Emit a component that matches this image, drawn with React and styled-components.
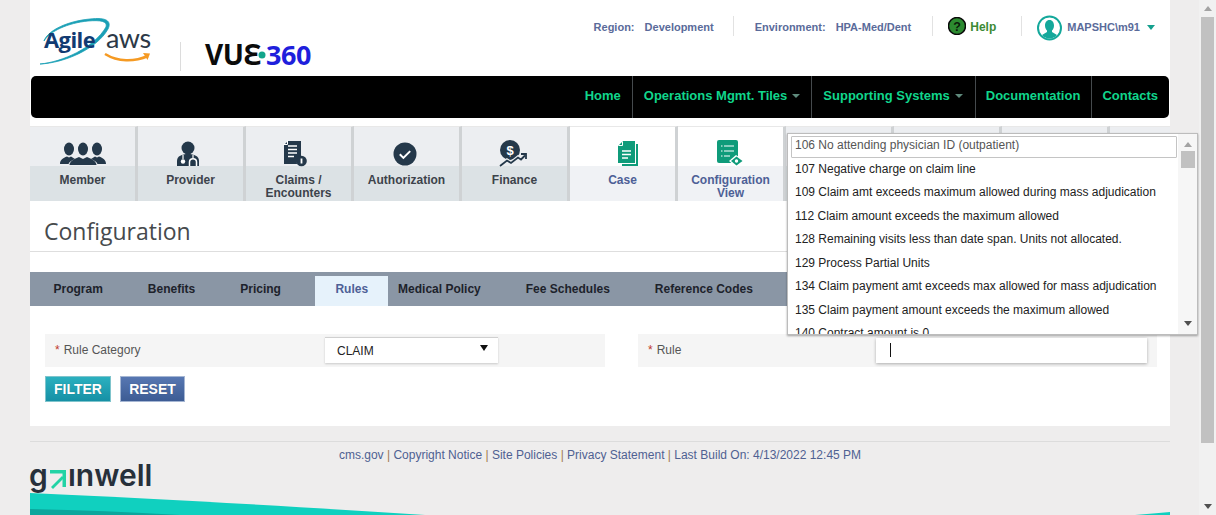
import React from "react";
import styled, { createGlobalStyle } from "styled-components";

const Global = createGlobalStyle`
  html, body { margin: 0; padding: 0; height: 515px; overflow: hidden; background: #eeeded; }
  body { font-family: "Liberation Sans", Arial, sans-serif; }
  * { box-sizing: border-box; }
`;

const Shell = styled.div`display: flex; width: 1216px; height: 515px; overflow: hidden; background: #eeeded;`;
const Main = styled.div`position: relative; width: 1199px; padding: 0 29px 0 30px; flex: none; display: flex; flex-direction: column;`;
const Sheet = styled.div`background: #fff; height: 426px; display: flex; flex-direction: column;`;

const Header = styled.header`height: 76px; display: flex; justify-content: space-between; flex: none;`;
const Logos = styled.div`display: flex; align-items: flex-start;`;
const Info = styled.div`display: flex; align-items: flex-start; padding: 16px 15px 0 0; font-size: 11px; font-weight: bold; color: #5a6b9a;`;
const InfoCell = styled.div`
  display: flex; align-items: center; height: 20px; gap: ${p => p.$gap || 0}px;
  padding: 2px ${p => p.$right}px 0 ${p => p.$left}px;
  border-left: ${p => (p.$first ? "none" : "1px solid #e2e2e2")};
`;
const InfoKey = styled.span`width: ${p => p.$w}px; flex: none;`;
const HelpLink = styled.span`color: #3c8a34; font-size: 12px;`;
const Caret = styled.i`display: inline-block; width: 0; height: 0; border-left: 4.5px solid transparent; border-right: 4.5px solid transparent; border-top: 5px solid ${p => p.$c};`;
const HelpGlyph = styled.svg`margin-top: -3px; flex: none;`;
const AvatarGlyph = styled.svg`margin-top: 1px; flex: none;`;
const UserCaret = styled(Caret)`margin-left: 2px;`;

const Nav = styled.nav`height: 42px; margin: 0 1px; background: #000; border-radius: 5px; display: flex; justify-content: flex-end; flex: none;`;
const NavItem = styled.a`
  display: flex; align-items: center; gap: 5px; height: 100%; padding: 0 ${p => p.$r || 11}px 3px ${p => p.$l || 11}px;
  font-size: 13px; font-weight: bold; color: #10d68c;
  border-left: ${p => (p.$first ? "none" : "1px solid #454a4d")};
`;
const NavCaret = styled(Caret)`border-left-width: 4px; border-right-width: 4px; border-top-width: 4.5px;`;

const Tiles = styled.div`display: flex; margin-top: 8px; height: 75px; flex: none; overflow: hidden;`;
const Tile = styled.div`
  flex: 0 0 108px; display: flex; flex-direction: column; text-align: center;
  border-right: 3px solid #cfd2d4; border-top: 1px solid #e8e8e8;
  background: ${p => (p.$on ? "#fff" : "#eceef1")};
`;
const TileIcon = styled.div`
  height: 39px; display: flex; align-items: center; justify-content: center; padding-top: 14px;
  transform: translateX(${p => p.$dx || 0}px);
`;
const TileLabel = styled.div`
  flex: 1; padding-top: 8px; font-size: 12px; line-height: 13px; font-weight: bold;
  background: ${p => (p.$on ? "#f0f2f5" : "#dce2e5")};
  color: ${p => (p.$on ? "#4d6096" : "#3d434b")};
`;
const TileRest = styled(Tile)`flex: 1; border-right: none;`;

const Title = styled.h1`margin: 0; height: 51px; padding: 15px 0 0 14px; font: 400 23px/30px "Open Sans", sans-serif; color: #464a4d; border-bottom: 1px solid #dedede; flex: none;`;
const Tabs = styled.div`margin-top: 20px; height: 34px; background: #8a96a5; display: flex; align-items: flex-end; padding-left: 1px; flex: none;`;
const Tab = styled.div`
  height: ${p => (p.$on ? 30 : 34)}px; line-height: ${p => (p.$on ? 26 : 34)}px;
  padding: 0 ${p => p.$r ?? 22.5}px 0 ${p => p.$l ?? 22.5}px; margin-left: ${p => p.$m || 0}px;
  font-size: 12px; font-weight: bold; color: ${p => (p.$on ? "#4d6096" : "#1d222b")};
  background: ${p => (p.$on ? "#e6f2fb" : "transparent")};
`;

const Form = styled.div`display: flex; gap: 33px; margin: 28px 13px 0 15px; flex: none;`;
const Field = styled.div`width: ${p => p.$w}px; height: 33px; background: #f5f5f5; display: flex; align-items: center; padding: 0 0 1px 10px; font-size: 12px; color: #555;`;
const Req = styled.span`color: #c0392b; margin-right: 4px;`;
const FieldLabel = styled.span`width: ${p => p.$w}px; flex: none;`;
const SelectBox = styled.div`
  position: relative; width: 173px; height: 26px; background: #fff; padding: 6px 12px; color: #222; font-size: 12px; line-height: 15px;
  box-shadow: 0 1px 2px rgba(0,0,0,.18); border-top: 1px solid #d0d0d0;
`;
const SelectArrow = styled.i`position: absolute; right: 10px; top: 7px; width: 0; height: 0; border-left: 4.5px solid transparent; border-right: 4.5px solid transparent; border-top: 6px solid #111;`;
const InputBox = styled.div`width: 271px; height: 25px; background: #fff; box-shadow: 0 1px 3px rgba(0,0,0,.3); padding: 5px 14px;`;
const Cursor = styled.div`width: 1px; height: 14px; background: #111;`;

const Buttons = styled.div`display: flex; gap: 9px; margin: 9px 0 0 15px; flex: none;`;
const Btn = styled.button`
  width: ${p => p.$w}px; height: 26px; padding: 0; font: bold 14px "Liberation Sans", Arial, sans-serif; color: #fff; text-shadow: 0 0 1px rgba(0,0,0,.25);
  border: 1px solid ${p => p.$b};
  background: linear-gradient(${p => p.$c1}, ${p => p.$c2});
`;

const Footer = styled.footer`flex: 1; position: relative; display: flex; flex-direction: column;`;
const Links = styled.div`margin-top: 15px; border-top: 1px solid #dcdcdc; height: 23px; padding-top: 5px; text-align: center; font-size: 12px; line-height: 16px; color: #4f6192; flex: none;`;
const Sep = styled.span`color: #a07a50;`;
const Gainwell = styled.svg`display: block; width: 125px; height: 29px; flex: none; overflow: visible;`;
const Wave = styled.svg`display: block; width: 1140px; height: 22px; flex: none;`;

const Drop = styled.div`
  position: absolute; left: 787px; top: 133px; width: 411px; height: 202px; background: #fff; overflow: hidden;
  border: 1px solid #bcbcbc; box-shadow: 0 1px 2px rgba(0,0,0,.35); display: flex;
`;
const DropList = styled.div`flex: 1; padding: 2px 1px 0 3px; min-width: 0;`;
const DropItem = styled.div`
  height: ${p => (p.$first ? 21.8 : 23.5)}px; line-height: ${p => (p.$first ? 17 : 23.5)}px; padding-left: ${p => (p.$first ? 3 : 4)}px; font-size: 12px; white-space: nowrap;
  color: ${p => (p.$first ? "#555" : "#222")};
  border: ${p => (p.$first ? "1px solid #c4c4c4" : "none")}; border-radius: 1px;
`;
const DropBar = styled.div`width: 19px; flex: none; background: #f6f6f6; display: flex; flex-direction: column; align-items: center; padding: 8px 0 8px;`;
const DropThumb = styled.div`width: 14px; height: 17px; background: #c1c1c1; margin-top: 4px;`;
const Spacer = styled.div`flex: 1;`;
const ArrowUp = styled.i`width: 0; height: 0; border-left: 4px solid transparent; border-right: 4px solid transparent; border-bottom: 5px solid ${p => p.$c || "#a3a3a3"};`;
const ArrowDown = styled.i`width: 0; height: 0; border-left: 4px solid transparent; border-right: 4px solid transparent; border-top: 5px solid ${p => p.$c || "#505050"};`;

const PageBar = styled.div`width: 17px; flex: none; background: #f1f1f1; display: flex; flex-direction: column; align-items: center; padding: 6px 0;`;
const PageThumb = styled.div`width: 13px; height: 426px; background: #c1c1c1; margin-top: 6px;`;

const navy = "#24384a";
const green = "#0f9b7a";

const MemberIcon = () => (
  <svg width="46" height="24" viewBox="0 0 46 24" fill={navy}>
    <ellipse cx="9" cy="7" rx="5" ry="6.500" /><ellipse cx="23" cy="7" rx="5" ry="6.500" /><ellipse cx="37" cy="7" rx="5" ry="6.500" />
    <path d="M0 22c0-4 3-6 7-7.500l2 1 2-1 4 2.500c-3 1-6 3-6.500 5z" />
    <path d="M46 22c0-4-3-6-7-7.500l-2 1-2-1-4 2.500c3 1 6 3 6.500 5z" />
    <path d="M9.500 23c0-3.500 5-6.500 9.500-8l4 2 4-2c4.500 1.500 9.500 4.500 9.500 8z" />
  </svg>
);
const ProviderIcon = () => (
  <svg width="24" height="26" viewBox="0 0 24 26">
    <circle cx="12" cy="7" r="6.500" fill={navy} />
    <path d="M1 25v-5c0-5 5-7 11-7s11 2 11 7v5z" fill={navy} />
    <path d="M7 14v4M17 14v3" stroke="#fff" strokeWidth="1.200" />
    <circle cx="7" cy="20.500" r="2.200" fill="#fff" />
    <path d="M13.500 25v-4c0-4.500 7-4.500 7 0v4" fill="none" stroke="#fff" strokeWidth="1.500" />
  </svg>
);
const ClaimsIcon = () => (
  <svg width="24" height="27" viewBox="0 0 24 27">
    <path d="M5 1h13v16a6 6 0 0 0-4 7H1V5z" fill={navy} />
    <path d="M5 6h9M5 9.500h9M5 13h9M5 16.500h6" stroke="#fff" strokeWidth="1.400" />
    <path d="M4.500 0.500v4H.5" fill="none" stroke="#fff" strokeWidth="1" />
    <circle cx="18.500" cy="21" r="5.300" fill={navy} />
    <path d="M18.500 18.500v5" stroke="#fff" strokeWidth="1.800" />
  </svg>
);
const AuthIcon = () => (
  <svg width="24" height="24" viewBox="0 0 24 24">
    <circle cx="12" cy="12" r="11.500" fill={navy} />
    <path d="M6.800 12.300l3.600 3.600 6.800-6.800" fill="none" stroke="#fff" strokeWidth="2" />
  </svg>
);
const FinanceIcon = () => (
  <svg width="28" height="28" viewBox="0 0 28 28">
    <circle cx="11" cy="10" r="10" fill={navy} />
    <text x="11" y="14.500" textAnchor="middle" fontSize="13" fontWeight="bold" fontFamily="Liberation Sans, sans-serif" fill="#fff">$</text>
    <path d="M1 26l7-5.500 4 2.500 7-5.500 3 2 4-4" fill="none" stroke="#eceef1" strokeWidth="4" />
    <path d="M1 26l7-5.500 4 2.500 7-5.500 3 2 4-4" fill="none" stroke={navy} strokeWidth="1.800" />
    <path d="M22 14h5v5" fill="none" stroke={navy} strokeWidth="1.800" />
  </svg>
);
const CaseIcon = () => (
  <svg width="20" height="25" viewBox="0 0 20 25">
    <path d="M18 3h2v22H4v-2h14z" fill={green} />
    <path d="M5 0h12v22H0V5z" fill={green} />
    <path d="M4.500 .5v4H.5" fill="none" stroke="#fff" />
    <path d="M4 10h9M4 13.500h9M4 17h6" stroke="#fff" strokeWidth="1.300" />
  </svg>
);
const ConfigIcon = () => (
  <svg width="28" height="27" viewBox="0 0 28 27">
    <rect x="0" y="0" width="21" height="23" rx="2" fill={green} />
    <path d="M4 6h1.500M7 6h10M4 11h1.500M7 11h10M4 16h1.500M7 16h6" stroke="#fff" strokeWidth="1.200" />
    <path d="M12 21l7-6 8.500 6-8.500 6z" fill="#fff" />
    <path d="M14 21l5.500-4.500 6 4.500-6 4.500z" fill={green} />
    <circle cx="19.500" cy="21" r="1.700" fill="#fff" />
  </svg>
);

const tiles = [
  { label: ["Member"], icon: <MemberIcon /> },
  { label: ["Provider"], icon: <ProviderIcon />, dx: -3 },
  { label: ["Claims /", "Encounters"], icon: <ClaimsIcon />, dx: -4 },
  { label: ["Authorization"], icon: <AuthIcon />, dx: -2 },
  { label: ["Finance"], icon: <FinanceIcon />, dx: -2 },
  { label: ["Case"], icon: <CaseIcon />, on: true, dx: 5 },
  { label: ["Configuration", "View"], icon: <ConfigIcon />, on: true },
  { label: [] }, { label: [] }, { label: [] },
];

const options = [
  "106 No attending physician ID (outpatient)",
  "107 Negative charge on claim line",
  "109 Claim amt exceeds maximum allowed during mass adjudication",
  "112 Claim amount exceeds the maximum allowed",
  "128 Remaining visits less than date span. Units not allocated.",
  "129 Process Partial Units",
  "134 Claim payment amt exceeds max allowed for mass adjudication",
  "135 Claim payment amount exceeds the maximum allowed",
  "140 Contract amount is 0",
];

const links = ["cms.gov", "Copyright Notice", "Site Policies", "Privacy Statement", "Last Build On: 4/13/2022 12:45 PM"];

export default function App() {
  return (
    <Shell>
      <Global />
      <Main>
        <Sheet>
          <Header>
            <Logos>
              <svg width="290" height="76" viewBox="0 0 290 76">
                <path d="M10 64C32 62 64 48 76 27 78 21 70 20 58 21 38 23 20 31 14 41 18 30 38 21 60 19 76 17 82 21 78 29 67 49 34 63 10 64z" fill="#1a9fb5" stroke="#1a9fb5" strokeWidth=".8" />
                <text x="14" y="48" fontFamily="Open Sans, sans-serif" fontWeight="700" fontSize="22" letterSpacing="-0.6" fill="#123b72">Agile</text>
                <text x="76" y="48" fontFamily="Lato, sans-serif" fontWeight="400" fontSize="27" letterSpacing="-0.5" fill="#2c3947">aws</text>
                <path d="M75 54c13 8 29 8 43 2" fill="none" stroke="#f59a23" strokeWidth="2.600" />
                <path d="M113 53l7 .5-2.500 6.500z" fill="#f59a23" />
                <path d="M150.500 42v29" stroke="#dcdcdc" />
                <text x="175" y="65" fontFamily="Noto Sans, sans-serif" fontWeight="700" fontSize="28" letterSpacing="-0.4" fill="#0b0b0b">VUƐ</text>
                <circle cx="232" cy="55" r="3.500" fill="#12a58a" />
                <text x="236" y="65" fontFamily="Noto Sans, sans-serif" fontWeight="700" fontSize="27" letterSpacing="-0.5" fill="#1f1fdc">360</text>
              </svg>
            </Logos>
            <Info>
              <InfoCell $first $left={0} $right={19}>
                <InfoKey $w={51}>Region:</InfoKey><span>Development</span>
              </InfoCell>
              <InfoCell $left={21} $right={21}>
                <InfoKey $w={81}>Environment:</InfoKey><span>HPA-Med/Dent</span>
              </InfoCell>
              <InfoCell $left={15} $right={25} $gap={4}>
                <HelpGlyph width="18" height="18" viewBox="0 0 18 18">
                  <circle cx="9" cy="9" r="8.500" fill="#2c8a30" stroke="#0a0a0a" strokeWidth="1.500" />
                  <text x="9" y="13.500" textAnchor="middle" fontSize="12.500" fontWeight="bold" fontFamily="Liberation Sans, sans-serif" fill="#0a1a0a">?</text>
                </HelpGlyph>
                <HelpLink>Help</HelpLink>
              </InfoCell>
              <InfoCell $left={15} $right={0} $gap={5}>
                <AvatarGlyph width="25" height="26" viewBox="0 0 25 26">
                  <circle cx="12.500" cy="13" r="11.500" fill="#fff" stroke="#14a89b" strokeWidth="2" />
                  <path d="M12.500 5c3 0 4.500 2.500 4.500 5.500 0 2.500-1 4-2 5v1.500l5 3c-1.500 2-4.500 3.500-7.500 3.500s-6-1.500-7.500-3.500l5-3V15.500c-1-1-2-2.500-2-5C8 7.500 9.500 5 12.500 5z" fill="#14a89b" />
                </AvatarGlyph>
                <span>MAPSHC\m91</span>
                <UserCaret $c="#14a08e" />
              </InfoCell>
            </Info>
          </Header>
          <Nav>
            <NavItem $first>Home</NavItem>
            <NavItem>Operations Mgmt. Tiles <NavCaret $c="#5f8a7c" /></NavItem>
            <NavItem $r={12}>Supporting Systems <NavCaret $c="#5f8a7c" /></NavItem>
            <NavItem $l={10}>Documentation</NavItem>
            <NavItem $l={10}>Contacts</NavItem>
          </Nav>
          <Tiles>
            {tiles.map((t, i) => (
              <Tile key={i} $on={t.on}>
                <TileIcon $dx={t.dx}>{t.icon}</TileIcon>
                <TileLabel $on={t.on}>{t.label.map(l => <div key={l}>{l}</div>)}</TileLabel>
              </Tile>
            ))}
            <TileRest><TileIcon /><TileLabel /></TileRest>
          </Tiles>
          <Title>Configuration</Title>
          <Tabs>
            <Tab>Program</Tab>
            <Tab>Benefits</Tab>
            <Tab>Pricing</Tab>
            <Tab $on $l={20} $r={20} $m={12}>Rules</Tab>
            <Tab $l={10}>Medical Policy</Tab>
            <Tab>Fee Schedules</Tab>
            <Tab>Reference Codes</Tab>
          </Tabs>
          <Form>
            <Field $w={560}>
              <FieldLabel $w={270}><Req>*</Req>Rule Category</FieldLabel>
              <SelectBox>CLAIM<SelectArrow /></SelectBox>
            </Field>
            <Field $w={519}>
              <FieldLabel $w={228}><Req>*</Req>Rule</FieldLabel>
              <InputBox><Cursor /></InputBox>
            </Field>
          </Form>
          <Buttons>
            <Btn $w={66} $b="#7fc4cc" $c1="#2bb0bf" $c2="#1690a5">FILTER</Btn>
            <Btn $w={65} $b="#a5b6d3" $c1="#5777b2" $c2="#3d5c94">RESET</Btn>
          </Buttons>
        </Sheet>
        <Footer>
          <Links>
            {links.map((l, i) => (
              <React.Fragment key={l}>{i > 0 && <Sep> | </Sep>}{l}</React.Fragment>
            ))}
          </Links>
          <Gainwell viewBox="0 0 125 29">
            <text x="-1" y="22" fontFamily="Inter, sans-serif" fontWeight="600" fontSize="30" fill="#27303a">g</text>
            <path d="M20 6h16v17h-3.500V9.500H20z" fill="#22d3a5" />
            <path d="M21 23l11-11 2 2-11 11z" fill="#22d3a5" />
            <text x="38" y="22" fontFamily="Inter, sans-serif" fontWeight="600" fontSize="30" fill="#27303a">ınwell</text>
          </Gainwell>
          <Wave viewBox="0 0 1140 22" preserveAspectRatio="none">
            <path d="M0 0C120 5 270 14 395 22H0z" fill="#10d0bf" />
            <path d="M0 16C50 17 100 19 150 22H0z" fill="#0ca69c" />
            <path d="M1105 22c12-1 24-2 35-3v3z" fill="#10d0bf" />
          </Wave>
        </Footer>
        <Drop>
          <DropList>
            {options.map((o, i) => <DropItem key={o} $first={i === 0}>{o}</DropItem>)}
          </DropList>
          <DropBar>
            <ArrowUp />
            <DropThumb />
            <Spacer />
            <ArrowDown />
          </DropBar>
        </Drop>
      </Main>
      <PageBar>
        <ArrowUp />
        <PageThumb />
        <Spacer />
        <ArrowDown />
      </PageBar>
    </Shell>
  );
}
